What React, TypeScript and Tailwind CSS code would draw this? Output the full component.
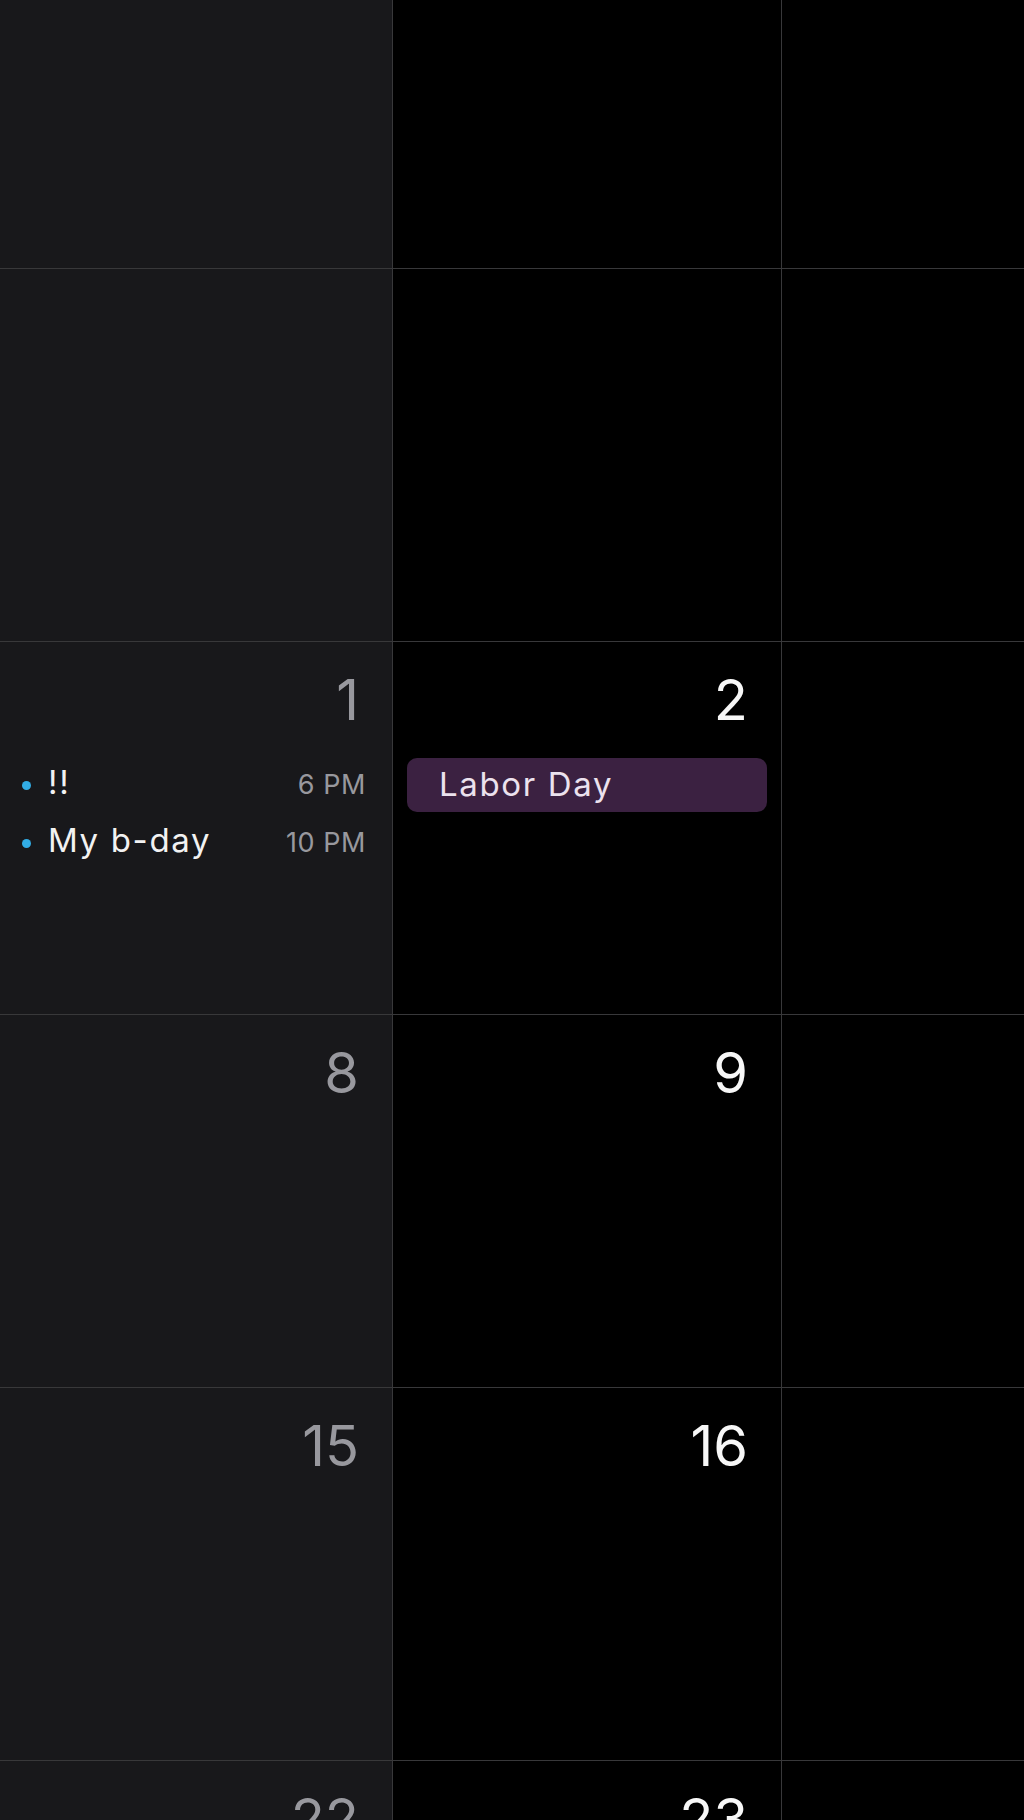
import React from 'react';

type CalEvent = { title: string; time: string };

type Week = {
    sun?: number;
    mon?: number;
    sunEvents?: CalEvent[];
    monHoliday?: string;
};

const weeks: Week[] = [
    {},
    { sun: 1, mon: 2, sunEvents: [{ title: '!!', time: '6 PM' }, { title: 'My b-day', time: '10 PM' }], monHoliday: 'Labor Day' },
    { sun: 8, mon: 9 },
    { sun: 15, mon: 16 },
    { sun: 22, mon: 23 },
];

function DayNumber({ value, muted }: { value?: number; muted?: boolean }) {
    if (value === undefined) return null;
    return (
        <div className={`pt-[30px] pr-[33px] text-right text-[56px] leading-none ${muted ? 'text-[#98989e]' : 'text-[#f7f7f7]'}`}>
            {value}
        </div>
    );
}

function WeekRow({ week }: { week: Week }) {
    return (
        <div className="h-[373px] flex border-t border-[#38383a]">
            {/* Sunday */}
            <div className="w-[393px] shrink-0 bg-[#18181b] border-r border-[#38383a]">
                <DayNumber value={week.sun} muted />
                {week.sunEvents && (
                    <div className="mt-[25px] pl-[22px] pr-[26px]">
                        {week.sunEvents.map((ev) => (
                            <div key={ev.title} className="h-[58px] flex items-baseline">
                                <span className="h-[9px] w-[9px] rounded-full bg-[#32ade6] mr-[17px] self-center translate-y-[3px]"></span>
                                <span className="flex-1 text-[33px] leading-[58px] tracking-[0.05em] text-[#f2f2f2]">{ev.title}</span>
                                <span className="text-[27px] tracking-[0.02em] text-[#98989e]">{ev.time}</span>
                            </div>
                        ))}
                    </div>
                )}
            </div>
            {/* Monday */}
            <div className="w-[389px] shrink-0 bg-black border-r border-[#38383a]">
                <DayNumber value={week.mon} />
                {week.monHoliday && (
                    <div className="mt-[30px] mx-[14px] h-[54px] rounded-[10px] bg-[#3b2141] flex items-center pl-[32px]">
                        <span className="text-[33px] tracking-[0.05em] text-[#ece2ee]">{week.monHoliday}</span>
                    </div>
                )}
            </div>
            {/* Tuesday */}
            <div className="flex-1 bg-black"></div>
        </div>
    );
}

export default function App() {
    return (
        <div className="h-[1820px] w-[1024px] overflow-hidden bg-black font-['Inter',sans-serif]">
            {/* top week, mostly scrolled out */}
            <div className="h-[268px] flex">
                <div className="w-[393px] shrink-0 bg-[#18181b] border-r border-[#38383a]"></div>
                <div className="w-[389px] shrink-0 bg-black border-r border-[#38383a]"></div>
                <div className="flex-1 bg-black"></div>
            </div>
            {weeks.map((w, i) => (
                <WeekRow key={i} week={w} />
            ))}
        </div>
    );
}
